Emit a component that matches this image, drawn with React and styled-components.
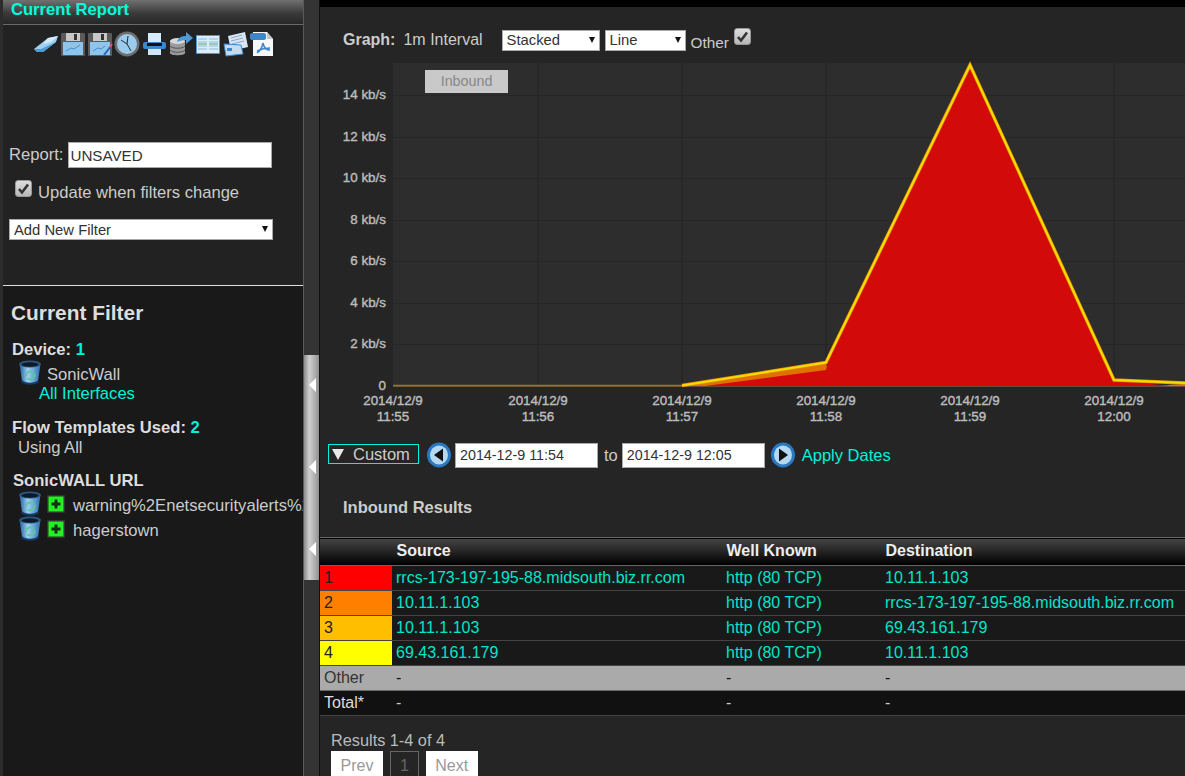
import React from "react";
import styled, { createGlobalStyle } from "styled-components";

const CYAN = "#00f2dc";

const GlobalStyle = createGlobalStyle`
  html, body {
    margin: 0;
    padding: 0;
    background: #252525;
  }
  * {
    box-sizing: border-box;
  }
`;

const Page = styled.div`
  display: flex;
  width: 1185px;
  height: 776px;
  overflow: hidden;
  background: #252525;
  color: #ccc;
  font-family: "Liberation Sans", Arial, sans-serif;
  font-size: 16px;
`;

const Sidebar = styled.aside`
  display: flex;
  flex-direction: column;
  flex: 0 0 304px;
  border-left: 3px solid #2c2c2c;
  border-right: 1px solid #5a5a5a;
  background: #191919;
  font-size: 16.6px;
  overflow: hidden;
`;

const ReportPanel = styled.section`
  height: 286px;
  flex: none;
  background: #222;
  border-bottom: 1px solid #ddd;
`;

const PanelHeader = styled.h2`
  margin: 0;
  height: 25px;
  padding: 0 0 0 8px;
  font-size: 16.6px;
  line-height: 20px;
  font-weight: 700;
  color: #00ffdc;
  background: linear-gradient(#707070, #3a3a3a 55%, #272727);
  border-bottom: 1px solid #6a6a6a;
`;

const Toolbar = styled.div`
  display: flex;
  gap: 1px;
  padding: 5px 0 0 30px;
  height: 32px;
`;

const ToolIcon = styled.svg`
  display: block;
  flex: none;
  width: 26px;
  height: 27px;
`;

const ReportRow = styled.label`
  display: flex;
  align-items: center;
  margin: 85px 0 0 6px;
  gap: 5px;
  color: #ccc;
`;

const TextField = styled.input`
  width: ${(p) => p.$width}px;
  height: ${(p) => p.$height}px;
  margin-left: ${(p) => p.$left || 0}px;
  padding: 0 0 0 ${(p) => p.$pad}px;
  border: 1px solid #aaa;
  border-radius: 0;
  background: #fff;
  color: #333;
  font-family: inherit;
  font-size: ${(p) => p.$size}px;
  outline: none;
`;

const UpdateRow = styled.label`
  display: flex;
  align-items: center;
  gap: 6px;
  margin: 15px 0 0 12px;
  height: 20px;
  color: #ccc;
`;

const CheckBox = styled.span`
  display: flex;
  align-items: center;
  justify-content: center;
  flex: none;
  width: 17px;
  height: 17px;
  border: 1px solid #999;
  border-radius: 3px;
  background: linear-gradient(#ddd, #b8b8b8);
  margin-top: ${(p) => p.$top || 0}px;
`;

const SelectWrap = styled.div`
  position: relative;
  width: ${(p) => p.$width}px;
  height: 21px;
  margin: ${(p) => p.$margin || 0};
  flex: none;

  &::after {
    content: "";
    position: absolute;
    right: 5px;
    top: 7px;
    border-left: 3px solid transparent;
    border-right: 3px solid transparent;
    border-top: 6px solid #111;
    pointer-events: none;
  }
`;

const Dropdown = styled.select`
  appearance: none;
  display: block;
  width: 100%;
  height: 100%;
  padding: 0 0 0 4px;
  border: 1px solid #aaa;
  border-radius: 0;
  background: #fff;
  color: #333;
  font-family: inherit;
  font-size: 14.8px;
  outline: none;
`;

const FilterPanel = styled.section`
  padding: 15px 0 0 8px;
  white-space: nowrap;
`;

const FilterTitle = styled.h3`
  margin: 0 0 16px;
  font-size: 20.9px;
  line-height: 23px;
  font-weight: 700;
  color: #ddd;
`;

const FilterLabel = styled.div`
  margin: ${(p) => p.$top || 0}px 0 0 ${(p) => p.$left || 1}px;
  font-weight: 700;
  line-height: 20px;
  color: #ddd;
`;

const Count = styled.span`
  color: ${CYAN};
`;

const FilterRow = styled.div`
  display: flex;
  align-items: center;
  height: 25px;
  margin-left: 7px;
  color: #ccc;
`;

const FilterName = styled.span`
  margin: 4px 0 0 ${(p) => p.$gap}px;
`;

const SubLink = styled.a`
  display: block;
  margin: -1px 0 0 28px;
  line-height: 19px;
  color: ${CYAN};
  text-decoration: none;
`;

const UsingAll = styled.div`
  margin-left: 7px;
  line-height: 20px;
  color: #ccc;
`;

const BinIcon = styled.svg`
  flex: none;
  width: 24px;
  height: 25px;
`;

const PlusIcon = styled.svg`
  flex: none;
  width: 18px;
  height: 18px;
  margin-left: 5px;
`;

const Splitter = styled.div`
  flex: 0 0 16px;
  padding-top: 355px;
  background: #343434;
  border-right: 1px solid #111;
`;

const Handle = styled.div`
  display: flex;
  flex-direction: column;
  align-items: center;
  justify-content: space-between;
  width: 15px;
  height: 225px;
  padding: 23px 0 24px 2px;
  background: linear-gradient(90deg, #8a8a8a, #cfcfcf 35%, #b5b5b5 65%, #909090);
`;

const HandleArrow = styled.span`
  width: 0;
  height: 0;
  border-top: 7px solid transparent;
  border-bottom: 7px solid transparent;
  border-right: 7px solid #fff;
`;

const Main = styled.main`
  flex: 1;
  min-width: 0;
  background: #252525;
`;

const TopStrip = styled.div`
  height: 7px;
  background: #000;
`;

const GraphBar = styled.div`
  display: flex;
  align-items: center;
  height: 48px;
  padding: 18px 0 0 23px;
`;

const GraphLabel = styled.b`
  color: #ccc;
  margin-right: 8px;
`;

const GraphInterval = styled.span`
  margin-right: 19px;
`;

const OtherLabel = styled.span`
  margin: 5px 5px 0 5px;
  font-size: 15.3px;
`;

const ChartWrap = styled.div`
  position: relative;
  height: 387px;
`;

const ChartSvg = styled.svg`
  display: block;
  width: 865px;
  height: 374px;
`;

const AxisText = styled.text`
  fill: #bcbcbc;
  stroke: #bcbcbc;
  stroke-width: 0.4px;
  font-size: 13.4px;
  font-family: "Liberation Sans", Arial, sans-serif;
`;

const LegendTag = styled.div`
  position: absolute;
  left: 105px;
  top: 15px;
  width: 83px;
  height: 23px;
  background: #c9c9c9;
  color: #888;
  font-size: 14.3px;
  line-height: 22px;
  text-align: center;
`;

const DateRow = styled.div`
  display: flex;
  align-items: center;
  height: 26px;
  padding-left: 8px;
  font-size: 16.5px;
`;

const RangeButton = styled.div`
  display: flex;
  align-items: center;
  width: 91px;
  height: 20px;
  margin: 0 8px 2px 0;
  padding-left: 3px;
  border: 1px solid ${CYAN};
  color: #ccc;
  white-space: nowrap;
`;

const RangeCaret = styled.span`
  width: 0;
  height: 0;
  margin-right: 9px;
  border-left: 6px solid transparent;
  border-right: 6px solid transparent;
  border-top: 11px solid #e8e8e8;
`;

const RoundIcon = styled.svg`
  flex: none;
  width: 24px;
  height: 26px;
  margin-left: ${(p) => p.$left || 0}px;
`;

const DateTo = styled.span`
  margin: 0 4px 0 6px;
`;

const ApplyLink = styled.a`
  margin-left: 7px;
  color: ${CYAN};
  text-decoration: none;
`;

const ResultsTitle = styled.h4`
  margin: 29px 0 20px 23px;
  font-size: 16.5px;
  line-height: 20px;
  font-weight: 700;
  color: #ccc;
`;

const ResultsTable = styled.table`
  width: 865px;
  table-layout: fixed;
  border-collapse: collapse;
  white-space: nowrap;
`;

const HeadRow = styled.tr`
  height: 28px;
  background: linear-gradient(#444, #2a2a2a 40%, #111 75%, #000);
  border-top: 1px solid #666;
  border-bottom: 1px solid #666;
`;

const HeadCell = styled.th`
  width: ${(p) => p.$width || "auto"};
  padding: 0 0 2px 4.5px;
  text-align: left;
  font-size: 16px;
  color: #eee;
`;

const Row = styled.tr`
  height: 25px;
  background: ${(p) => p.$bg || "#191919"};
  color: ${(p) => p.$text || CYAN};
  border-bottom: 1px solid ${(p) => p.$line || "#444"};
`;

const RankCell = styled.td`
  padding: 0 0 0 4px;
  background: ${(p) => p.$bg || "transparent"};
  color: ${(p) => p.$text || "#222"};
`;

const Cell = styled.td`
  padding: 0 0 0 4px;
  color: #00e4cc;
  overflow: hidden;
`;

const PlainCell = styled.td`
  padding: 0 0 0 4px;
  color: inherit;
`;

const ResultsFooter = styled.div`
  padding: 15px 0 0 11px;
  color: #bbb;
`;

const ResultsCount = styled.div`
  font-size: 16.3px;
  line-height: 19px;
`;

const Pager = styled.div`
  display: flex;
  gap: 7px;
  margin-top: 1px;
`;

const PageButton = styled.span`
  display: block;
  height: 27px;
  padding: 0 ${(p) => (p.$current ? 9 : 8.5)}px;
  line-height: 27px;
  border: 1px solid ${(p) => (p.$current ? "#666" : "#fff")};
  background: ${(p) => (p.$current ? "transparent" : "#fff")};
  color: ${(p) => (p.$current ? "#666" : "#999")};
`;

const Check = () => (
  <svg width="13" height="13" viewBox="0 0 13 13">
    <path d="M2 7l3 3.5L11 2.5" fill="none" stroke="#333" strokeWidth="2.6" />
  </svg>
);

const Bin = () => (
  <BinIcon viewBox="0 0 24 25">
    <defs>
      <linearGradient id="binBody" x1="0" x2="1" y1="0" y2="0">
        <stop offset="0" stopColor="#1f5f9f" />
        <stop offset="0.4" stopColor="#9fd0f0" />
        <stop offset="1" stopColor="#2a70b4" />
      </linearGradient>
    </defs>
    <path d="M1.5 4l2.5 17c.4 3 15.600 3 16 0L22.500 4z" fill="url(#binBody)" />
    <ellipse cx="12" cy="4" rx="11" ry="3.5" fill="#2b5680" />
    <ellipse cx="12" cy="4.5" rx="8.5" ry="2.2" fill="#0d1a28" />
    <path d="M8 16a4.500 4.500 0 0 1 8-3M16.500 14a4.500 4.500 0 0 1-7 4.500" fill="none" stroke="#5cc8a0" strokeWidth="2" />
    <path d="M3.500 21c3 3.500 14 3.500 17 0" fill="none" stroke="#123a6a" strokeWidth="2" />
  </BinIcon>
);

const Plus = () => (
  <PlusIcon viewBox="0 0 18 18">
    <rect width="18" height="18" rx="1" fill="#333" />
    <rect x="1.500" y="1.500" width="15" height="15" fill="#22f022" />
    <path d="M9 4.500v9M4.500 9h9" stroke="#143014" strokeWidth="3" />
  </PlusIcon>
);

const RoundArrow = ({ dir, left }) => (
  <RoundIcon $left={left} viewBox="0 0 24 26">
    <ellipse cx="12" cy="13" rx="12" ry="12.500" fill="#2a78c0" />
    <ellipse cx="12" cy="13" rx="9" ry="9.500" fill="#b4d8f0" />
    <path d={dir === "left" ? "M7 13l9-6.500v13z" : "M17 13L8 6.500v13z"} fill="#111" />
  </RoundIcon>
);

const toolIcons = [
  // eraser
  <>
    <path d="M1 19L15 8l10-2-2 6-13 10-6 0z" fill="#9fd0f0" />
    <path d="M1 19l7 0 15-7-13 10-6 0z" fill="#4f9bd6" />
    <path d="M15 8l10-2-7 6-8 2z" fill="#d5edfb" />
  </>,
  // floppy
  <>
    <rect x="1" y="3" width="24" height="23" rx="1" fill="#5a5a5a" />
    <rect x="6" y="3" width="14" height="8" fill="#c8c8c8" />
    <rect x="14" y="4" width="3" height="6" fill="#333" />
    <rect x="3" y="12" width="20" height="13" fill="#8cc6ee" />
    <path d="M6 21l5-3 3 1 6-4" stroke="#4d8fc4" fill="none" />
  </>,
  // floppy with pen
  <>
    <rect x="1" y="3" width="24" height="23" rx="1" fill="#5a5a5a" />
    <rect x="6" y="3" width="14" height="8" fill="#c8c8c8" />
    <rect x="14" y="4" width="3" height="6" fill="#333" />
    <rect x="3" y="12" width="20" height="13" fill="#8cc6ee" />
    <path d="M6 21l5-3 3 1 4-3" stroke="#4d8fc4" fill="none" />
    <path d="M17 25l7-9" stroke="#2b63b8" strokeWidth="2" />
    <path d="M23 17l2-3" stroke="#e2574c" strokeWidth="2" />
  </>,
  // clock
  <>
    <circle cx="13" cy="14" r="12.500" fill="#6e6e6e" />
    <circle cx="13" cy="14" r="10" fill="#9ccbec" />
    <path d="M13 14l-6-4M13 14l1-8M13 14l4 7" stroke="#1b2a38" />
  </>,
  // printer
  <>
    <rect x="7" y="3" width="13" height="9" fill="#d6ecfa" />
    <rect x="2" y="12" width="23" height="7" rx="2" fill="#3f86c8" />
    <rect x="6" y="13" width="15" height="3" fill="#111" />
    <rect x="7" y="19" width="13" height="6" fill="#cfe6f7" />
  </>,
  // database with arrow
  <>
    <path d="M2 11v12c0 3 15 3 15 0V11z" fill="#9a9a9a" />
    <ellipse cx="9.500" cy="11" rx="7.500" ry="3" fill="#d8d8d8" />
    <path d="M2 16c2 3 13 3 15 0M2 20c2 3 13 3 15 0" stroke="#555" fill="none" />
    <path d="M9 12c1-5 5-6 9-6V2l7 6-7 6v-4c-4 0-6 1-9 2z" fill="#4d9ad8" />
  </>,
  // table
  <>
    <rect x="1" y="5" width="24" height="19" fill="#4f94cc" />
    <rect x="2" y="6" width="22" height="17" fill="#dcedf8" />
    <path d="M3 9h9M14 9h9M3 12h9M14 12h9M3 16h9M14 16h9M3 19h9M14 19h9" stroke="#8ab9dc" />
    <path d="M3 14h9M14 14h9" stroke="#5ea860" />
  </>,
  // documents
  <>
    <path d="M6 6l17-4 3 15-17 4z" fill="#d7e6f2" />
    <path d="M9 8l11-3M9 11l12-3M10 14l12-3" stroke="#8aa9c4" />
    <path d="M2 14l17 1 2 9-17 2z" fill="#c4dcef" stroke="#3f86c8" />
    <rect x="5" y="18" width="5" height="3" fill="#3f86c8" />
  </>,
  // pdf
  <>
    <path d="M4 2h14l6 7v17H4z" fill="#f7f7f7" />
    <path d="M18 2v7h6z" fill="#c4c4c4" />
    <rect x="1" y="3" width="16" height="7" rx="2" fill="#3f86c8" />
    <path d="M14 13c-1 5-3 8-6 10M14 13c1 5 3 7 7 7M8 21c4-2 8-3 13-3" fill="none" stroke="#3f86c8" strokeWidth="1.500" />
  </>,
];

const yTicks = [
  ["14 kb/s", 94],
  ["12 kb/s", 136],
  ["10 kb/s", 177],
  ["8 kb/s", 219],
  ["6 kb/s", 260],
  ["4 kb/s", 302],
  ["2 kb/s", 343],
];

const xTicks = [
  [393, "11:55"],
  [538, "11:56"],
  [682, "11:57"],
  [826, "11:58"],
  [970, "11:59"],
  [1114, "12:00"],
];

const rows = [
  { rank: "1", color: "#ff0000", source: "rrcs-173-197-195-88.midsouth.biz.rr.com", dest: "10.11.1.103" },
  { rank: "2", color: "#ff8000", source: "10.11.1.103", dest: "rrcs-173-197-195-88.midsouth.biz.rr.com" },
  { rank: "3", color: "#ffbf00", source: "10.11.1.103", dest: "69.43.161.179" },
  { rank: "4", color: "#ffff00", source: "69.43.161.179", dest: "10.11.1.103" },
];

const linePath = "M682 385.500L826 362.500 970 65 1114 380 1185 383";

const Chart = () => (
  <ChartSvg viewBox="320 55 865 374">
    <rect x="393" y="63" width="792" height="323" fill="#2d2d2d" />
    {xTicks.slice(1).map(([x]) => (
      <line key={x} x1={x} x2={x} y1="63" y2="386" stroke="#222" />
    ))}
    {yTicks.map(([label, y]) => (
      <line key={label} x1="393" x2="1185" y1={y + 1.5} y2={y + 1.5} stroke="#262626" />
    ))}
    <path d="M682 386L826 362 828 372 720 386z" fill="#e07000" />
    <path d="M1150 386L1185 384V386z" fill="#e07000" />
    <path d="M705 386L826 370 828 362 970 64 1114 380 1170 386z" fill="#d20a0a" />
    <line x1="393" x2="1185" y1="386.500" y2="386.500" stroke="#6a4a40" />
    <path d="M393 385.500H682" fill="none" stroke="#8f7d10" strokeWidth="1.500" />
    <path d={linePath} fill="none" stroke="#e89000" strokeWidth="3.400" />
    <path d={linePath} fill="none" stroke="#f5dc00" strokeWidth="2" />
    {yTicks.map(([label, y]) => (
      <AxisText key={label} x="386" y={y + 5} textAnchor="end">{label}</AxisText>
    ))}
    <AxisText x="386" y="390" textAnchor="end">0</AxisText>
    {xTicks.map(([x, time]) => (
      <g key={time}>
        <AxisText x={x} y="405" textAnchor="middle">2014/12/9</AxisText>
        <AxisText x={x} y="421" textAnchor="middle">{time}</AxisText>
      </g>
    ))}
  </ChartSvg>
);

const App = () => (
  <>
    <GlobalStyle />
    <Page>
      <Sidebar>
        <ReportPanel>
          <PanelHeader>Current Report</PanelHeader>
          <Toolbar>
            {toolIcons.map((icon, i) => (
              <ToolIcon key={i} viewBox="0 0 26 27">{icon}</ToolIcon>
            ))}
          </Toolbar>
          <ReportRow>
            Report:
            <TextField $width={204} $height={26} $pad={1} $size={15.2} defaultValue="UNSAVED" />
          </ReportRow>
          <UpdateRow>
            <CheckBox $top={-9}><Check /></CheckBox>
            Update when filters change
          </UpdateRow>
          <SelectWrap $width={264} $margin="16px 0 0 6px">
            <Dropdown defaultValue="add">
              <option value="add">Add New Filter</option>
            </Dropdown>
          </SelectWrap>
        </ReportPanel>
        <FilterPanel>
          <FilterTitle>Current Filter</FilterTitle>
          <FilterLabel>Device: <Count>1</Count></FilterLabel>
          <FilterRow>
            <Bin />
            <FilterName $gap={5}>SonicWall</FilterName>
          </FilterRow>
          <SubLink href="#">All Interfaces</SubLink>
          <FilterLabel $top={15}>Flow Templates Used: <Count>2</Count></FilterLabel>
          <UsingAll>Using All</UsingAll>
          <FilterLabel $top={13} $left={2}>SonicWALL URL</FilterLabel>
          <FilterRow>
            <Bin />
            <Plus />
            <FilterName $gap={8}>warning%2Enetsecurityalerts%2</FilterName>
          </FilterRow>
          <FilterRow>
            <Bin />
            <Plus />
            <FilterName $gap={8}>hagerstown</FilterName>
          </FilterRow>
        </FilterPanel>
      </Sidebar>
      <Splitter>
        <Handle>
          <HandleArrow />
          <HandleArrow />
          <HandleArrow />
        </Handle>
      </Splitter>
      <Main>
        <TopStrip />
        <GraphBar>
          <GraphLabel>Graph:</GraphLabel>
          <GraphInterval>1m Interval</GraphInterval>
          <SelectWrap $width={98} $margin="0 5px 0 0">
            <Dropdown defaultValue="stacked">
              <option value="stacked">Stacked</option>
            </Dropdown>
          </SelectWrap>
          <SelectWrap $width={81}>
            <Dropdown defaultValue="line">
              <option value="line">Line</option>
            </Dropdown>
          </SelectWrap>
          <OtherLabel>Other</OtherLabel>
          <CheckBox $top={-8}><Check /></CheckBox>
        </GraphBar>
        <ChartWrap>
          <Chart />
          <LegendTag>Inbound</LegendTag>
        </ChartWrap>
        <DateRow>
          <RangeButton>
            <RangeCaret />
            Custom
          </RangeButton>
          <RoundArrow dir="left" />
          <TextField $left={4} $width={143} $height={25} $pad={4} $size={14.3} defaultValue="2014-12-9 11:54" />
          <DateTo>to</DateTo>
          <TextField $width={143} $height={25} $pad={4} $size={14.3} defaultValue="2014-12-9 12:05" />
          <RoundArrow dir="right" left={6} />
          <ApplyLink href="#">Apply Dates</ApplyLink>
        </DateRow>
        <ResultsTitle>Inbound Results</ResultsTitle>
        <ResultsTable>
          <thead>
            <HeadRow>
              <HeadCell $width="72px"></HeadCell>
              <HeadCell $width="330px">Source</HeadCell>
              <HeadCell $width="159px">Well Known</HeadCell>
              <HeadCell>Destination</HeadCell>
            </HeadRow>
          </thead>
          <tbody>
            {rows.map((row) => (
              <Row key={row.rank}>
                <RankCell $bg={row.color}>{row.rank}</RankCell>
                <Cell>{row.source}</Cell>
                <Cell>http (80 TCP)</Cell>
                <Cell>{row.dest}</Cell>
              </Row>
            ))}
            <Row $bg="#aaa" $text="#111" $line="#666">
              <RankCell $text="#333">Other</RankCell>
              <PlainCell>-</PlainCell>
              <PlainCell>-</PlainCell>
              <PlainCell>-</PlainCell>
            </Row>
            <Row $bg="#111" $text="#ccc">
              <RankCell $text="#ddd">Total*</RankCell>
              <PlainCell>-</PlainCell>
              <PlainCell>-</PlainCell>
              <PlainCell>-</PlainCell>
            </Row>
          </tbody>
        </ResultsTable>
        <ResultsFooter>
          <ResultsCount>Results 1-4 of 4</ResultsCount>
          <Pager>
            <PageButton>Prev</PageButton>
            <PageButton $current>1</PageButton>
            <PageButton>Next</PageButton>
          </Pager>
        </ResultsFooter>
      </Main>
    </Page>
  </>
);

export default App;
